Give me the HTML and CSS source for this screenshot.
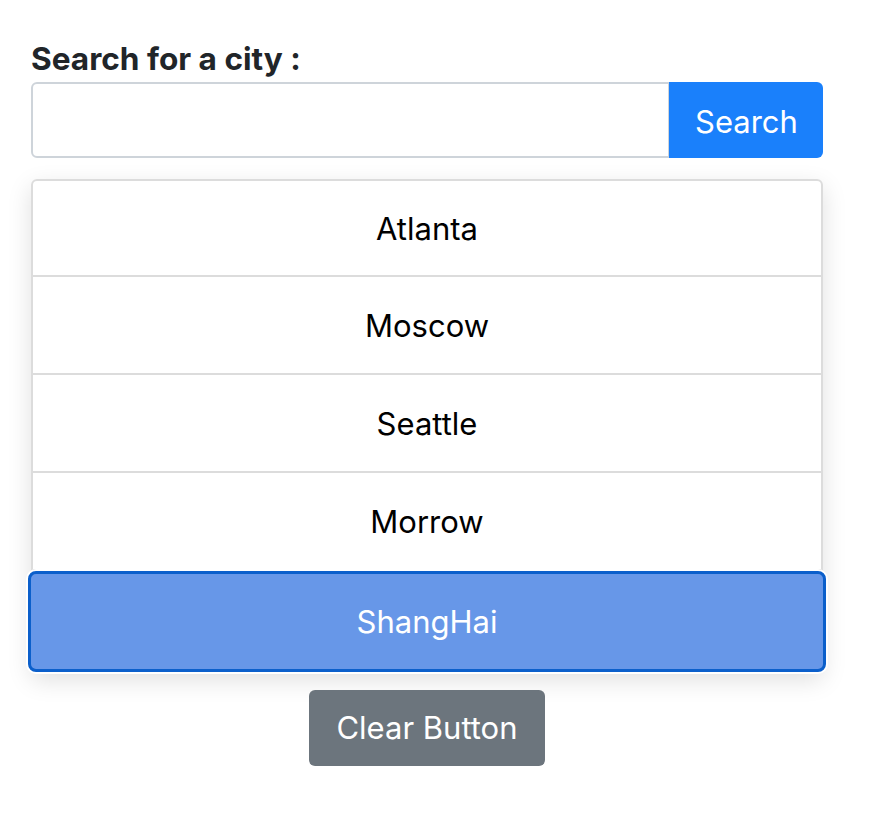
FILE: index.html
```html
<!DOCTYPE html>
<html>
<head>
<meta charset="utf-8">
<link rel="stylesheet" href="styles.css">
</head>
<body>
<div class="page">
  <label class="label" for="city">Search for a city :</label>
  <div class="input-group">
    <input id="city" class="field" type="text">
    <button class="btn btn-primary">Search</button>
  </div>
  <ul class="list">
    <li class="item">Atlanta</li>
    <li class="item">Moscow</li>
    <li class="item">Seattle</li>
    <li class="item">Morrow</li>
    <li class="item active">ShangHai</li>
  </ul>
  <div class="actions">
    <button class="btn btn-secondary">Clear Button</button>
  </div>
</div>
</body>
</html>
```
FILE: styles.css
```css
html, body {
  margin: 0;
  padding: 0;
  background: #fff;
}
body {
  font-family: Inter, "Liberation Sans", sans-serif;
  color: #212529;
}
.page {
  width: 792px;
  padding: 35px 0 0 31px;
  display: flex;
  flex-direction: column;
}
.label {
  font-size: 31.6px;
  font-weight: 700;
  line-height: 47px;
  display: block;
}
.input-group {
  display: flex;
  height: 76px;
}
.field {
  flex: 1;
  border: 2px solid #ced4da;
  border-right: 1px solid #ced4da;
  border-radius: 6px 0 0 6px;
  margin: 0;
  padding: 0 24px;
  font-size: 31px;
  font-family: inherit;
  outline: none;
}
.btn {
  border: none;
  color: #fff;
  font-family: inherit;
  font-size: 31px;
  line-height: 48px;
  padding: 14px 26px;
  margin: 0;
  cursor: pointer;
}
.btn-primary {
  background: #1a80fb;
  border-radius: 0 6px 6px 0;
  width: 154px;
  padding-top: 16px;
  padding-bottom: 14px;
}
.list {
  list-style: none;
  margin: 21px 0 0;
  padding: 0;
  border-radius: 6px;
  box-shadow: 0 8px 24px rgba(0, 0, 0, 0.13);
  display: flex;
  flex-direction: column;
}
.item {
  height: 98px;
  box-sizing: border-box;
  display: flex;
  align-items: center;
  justify-content: center;
  font-size: 31px;
  color: #000;
  border: 2px solid #dcdcdc;
  border-top-width: 0;
  background: #fff;
}
.item:first-child {
  border-top-width: 2px;
  border-radius: 6px 6px 0 0;
}
.item.active {
  height: 101px;
  margin: 0 -3px;
  border: 3px solid #0b5fcb;
  border-radius: 8px;
  background: #6797e8;
  color: #fff;
  box-shadow: 0 0 0 2px #fff;
  position: relative;
}
.actions {
  display: flex;
  justify-content: center;
  margin-top: 18px;
}
.btn-secondary {
  background: #6c757d;
  border-radius: 6px;
  height: 76px;
  padding: 0 27px;
}
```
